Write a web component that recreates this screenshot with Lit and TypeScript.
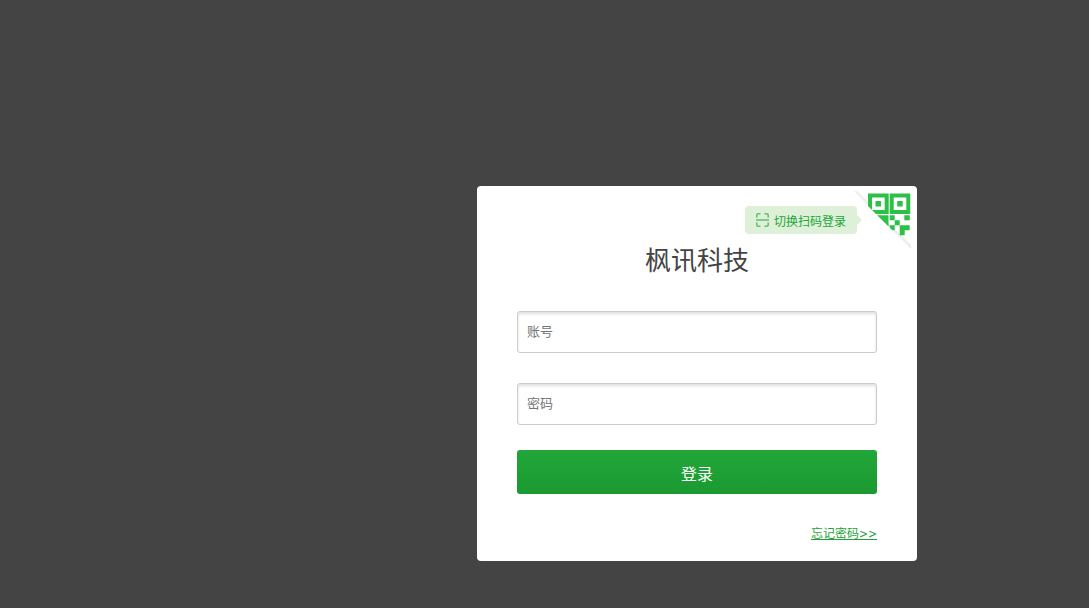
import { LitElement, html, css } from "lit";
import { customElement } from "lit/decorators.js";

@customElement("app-root")
export class AppRoot extends LitElement {
  static styles = css`
    :host {
      display: block;
      box-sizing: border-box;
      min-height: 100vh;
      padding: 186px 172px 47px 16px;
      background: #444;
      font-family: "Noto Sans CJK SC", sans-serif;
    }
    *, *::before { box-sizing: border-box; }
    .card {
      position: relative;
      max-width: 440px;
      margin-left: auto;
      padding: 53px 40px 17px;
      background: #fff;
      border-radius: 4px;
    }
    .title {
      margin: 0 0 32px;
      font-size: 26px;
      line-height: 40px;
      font-weight: 400;
      color: #444;
      text-align: center;
    }
    .form { display: flex; flex-direction: column; }
    .field {
      width: 100%;
      height: 42px;
      margin-bottom: 30px;
      padding: 0 9px 4px;
      border: 1px solid #ccc;
      border-radius: 3px;
      background: #fff;
      box-shadow: inset 0 2px 3px rgba(0, 0, 0, 0.12);
      font: 400 13px/20px "Noto Sans CJK SC", sans-serif;
      color: #333;
      outline: none;
    }
    .field.last { margin-bottom: 25px; }
    .field::placeholder { color: #757575; opacity: 1; }
    .submit {
      height: 44px;
      padding: 2px 0 0;
      border: 0;
      border-radius: 3px;
      background: linear-gradient(#21a639, #1b9a31);
      font: 400 16px/24px "Noto Sans CJK SC", sans-serif;
      color: #fff;
      cursor: pointer;
    }
    .forgot {
      align-self: flex-end;
      margin-top: 30px;
      font-family: "DejaVu Sans Condensed", "Noto Sans CJK SC", sans-serif;
      font-size: 12px;
      line-height: 20px;
      color: #1fa237;
    }
    .switch {
      position: absolute;
      top: 0;
      right: 0;
      display: flex;
      align-items: flex-start;
      padding: 0;
      border: 0;
      background: none;
      color: #22a53b;
      font: 400 12px/28px "Noto Sans CJK SC", sans-serif;
      cursor: pointer;
    }
    .tip {
      position: relative;
      display: flex;
      align-items: center;
      gap: 5px;
      height: 28px;
      margin-top: 20px;
      padding: 0 11px;
      border-radius: 4px;
      background: #def0d8;
    }
    .tip::after {
      content: "";
      position: absolute;
      left: 100%;
      top: 9px;
      border: 5px solid transparent;
      border-left-color: #def0d8;
      border-right: 0;
    }
    .label { padding-top: 2px; }
    .scan { display: block; }
    .qr { display: block; margin-left: -4px; }
  `;

  render() {
    return html`
      <main class="card">
        <button class="switch" type="button">
          <span class="tip">
            <svg class="scan" width="13" height="14" viewBox="0 0 13 14" fill="none" stroke="#63bf70" stroke-width="1.6" aria-hidden="true">
              <path d="M.8 4.5V2.3Q.8.8 2.3.8H4.5M8.5.8h2.2q1.5 0 1.5 1.5v2.2M12.2 9.5v2.2q0 1.5-1.5 1.5H8.5M4.5 13.2H2.3Q.8 13.2.8 11.7V9.5M0 7h13" />
            </svg>
            <span class="label">切换扫码登录</span>
          </span>
          <svg class="qr" width="64" height="68" viewBox="0 0 64 68" aria-hidden="true">
            <defs>
              <clipPath id="fold"><path d="M0 5H64V68H63L0 5Z" /></clipPath>
            </defs>
            <path d="M1 5H4L58 59V63Z" fill="#ededed" />
            <g clip-path="url(#fold)" fill="#2cc046">
              <path fill-rule="evenodd" d="M15 7.5h20.7v20.5H15zM19 11.5v12.5H31.7V11.5zM22.5 15h5.5v5.5h-5.5zM36.7 7.5h20.6v20.5H36.7zM40.7 11.5v12.5h12.6V11.5zM44.2 15h5.5v5.5h-5.5z" />
              <path d="M15 29.3h20.5v20.5H15z" />
              <path d="M36.7 29.3h5v5h-5zM51.3 29.3h5.5v5h-5.5zM41.7 34.3h5v5h-5zM36.7 39.3h5v5h-5zM46.7 39.3h10v5h-5v5h-5z" />
            </g>
          </svg>
        </button>
        <h1 class="title">枫讯科技</h1>
        <form class="form">
          <input class="field" type="text" aria-label="账号" placeholder="账号" autocomplete="username" />
          <input class="field last" type="password" aria-label="密码" placeholder="密码" autocomplete="current-password" />
          <button class="submit" type="button">登录</button>
          <a class="forgot" href="#">忘记密码&gt;&gt;</a>
        </form>
      </main>
    `;
  }
}
